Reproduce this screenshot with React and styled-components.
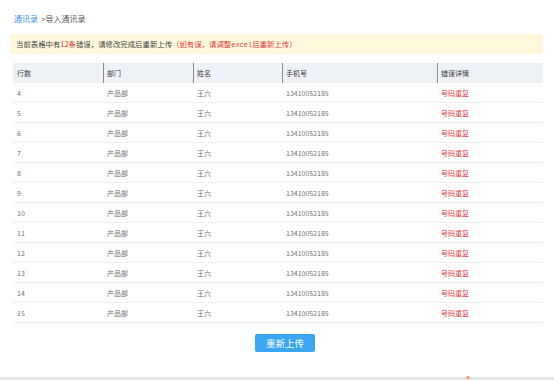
import styled, { createGlobalStyle } from "styled-components";

const GlobalStyle = createGlobalStyle`
  html, body {
    margin: 0;
    padding: 0;
    background: #fff;
  }
  body {
    font-family: "Noto Sans CJK SC", "Noto Sans", sans-serif;
    color: #333;
  }
`;

const StyledPage = styled.div`
  min-height: 380px;
  display: flex;
  flex-direction: column;
  box-sizing: border-box;

  & > .page__body {
    flex: 1;
    padding: 13px 11px 0 11px;
  }
`;

const Breadcrumb = styled.div`
  font-size: 8px;
  line-height: 12px;
  height: 12px;
  padding-left: 3px;
  color: #555;

  & > a {
    color: #3a93e6;
    text-decoration: none;
    margin-right: 3px;
  }
`;

const Alert = styled.div`
  margin-top: 9px;
  height: 20px;
  line-height: 20px;
  padding-left: 5px;
  background: #fef9dc;
  font-size: 7.4px;
  color: #444;
  white-space: nowrap;

  & > .alert__red {
    color: #e0383f;
  }

  & .alert__latin {
    font-family: "Liberation Mono", monospace;
    font-size: 7px;
  }
`;

const Table = styled.div`
  margin: 9px 0 0 2px;
  font-size: 7px;
`;

const Row = styled.div`
  display: grid;
  grid-template-columns: 90px 90px 89px 155px 1fr;
  height: 20px;
  box-sizing: border-box;
  align-items: center;
  background: ${(p) => (p.$head ? "#eef1f5" : "#fff")};
  border-bottom: ${(p) => (p.$head ? "none" : "1px solid #eeeeee")};
  color: ${(p) => (p.$head ? "#3a3a3a" : "#707070")};
`;

const Cell = styled.div`
  height: 100%;
  display: flex;
  align-items: center;
  padding-left: 3px;
  border-left: ${(p) => (p.$sep ? "1px solid #8f8f8f" : "1px solid transparent")};
  color: ${(p) => (p.$error ? "#e0383f" : "inherit")};
  box-sizing: border-box;
`;

const Actions = styled.div`
  display: flex;
  justify-content: center;
  margin-top: 11px;
  padding-left: 16px;
`;

const Button = styled.button`
  width: 60px;
  height: 18px;
  padding: 0;
  border: none;
  border-radius: 2px;
  background: #3aa6f2;
  color: #fff;
  font-family: "Noto Sans CJK SC", sans-serif;
  font-size: 9.5px;
  line-height: 18px;
  cursor: pointer;
`;

const Footer = styled.div`
  position: relative;
  height: 3px;
  background: #e6e6e6;

  & > .footer__mark {
    position: absolute;
    left: 466px;
    top: -1px;
    width: 4px;
    height: 3px;
    border-radius: 2px;
    background: #f0a58a;
  }
`;

const columns = ["行数", "部门", "姓名", "手机号", "错误详情"];
const rows = [4, 5, 6, 7, 8, 9, 10, 11, 12, 13, 14, 15];

function App() {
  return (
    <>
      <GlobalStyle />
      <StyledPage>
        <div className="page__body">
          <Breadcrumb>
            <a href="/">通讯录</a>&gt;导入通讯录
          </Breadcrumb>
          <Alert>
            当前表格中有<span className="alert__red">12条</span>错误，请修改完成后重新上传
            <span className="alert__red">
              （如有误，请调整<span className="alert__latin">excel</span>后重新上传）
            </span>
          </Alert>
          <Table>
            <Row $head>
              {columns.map((c, i) => (
                <Cell key={c} $sep={i > 0}>
                  {c}
                </Cell>
              ))}
            </Row>
            {rows.map((n) => (
              <Row key={n}>
                <Cell>{n}</Cell>
                <Cell>产品部</Cell>
                <Cell>王六</Cell>
                <Cell>13410052185</Cell>
                <Cell $error>号码重复</Cell>
              </Row>
            ))}
          </Table>
          <Actions>
            <Button type="button">重新上传</Button>
          </Actions>
        </div>
        <Footer>
          <span className="footer__mark" />
        </Footer>
      </StyledPage>
    </>
  );
}

export default App;
